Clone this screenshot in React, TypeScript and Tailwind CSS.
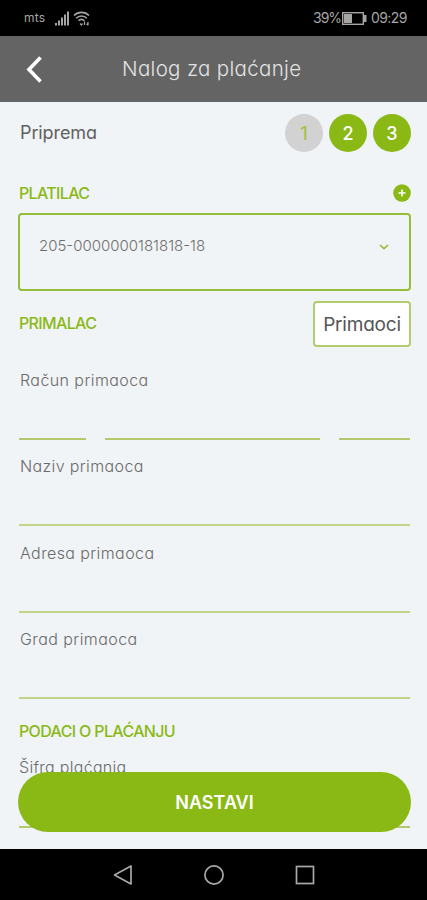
import React from 'react';
import clsx from 'clsx';

const steps = [
  { id: 1, done: false },
  { id: 2, done: true },
  { id: 3, done: true },
];

const fields = [
  { label: 'Naziv primaoca', tracking: 'tracking-[0.37px]' },
  { label: 'Adresa primaoca', tracking: 'tracking-[0.4px]' },
  { label: 'Grad primaoca', tracking: 'tracking-[0.43px]' },
];

function StatusBar() {
  return (
    <div className="h-9 shrink-0 bg-black flex items-center justify-between pl-6 pr-5 text-[#a5a5a5]">
      <div className="flex items-center">
        <span className="w-[23px] text-[12px] leading-none tracking-[0.2px]">mts</span>
        <svg width="15" height="15" viewBox="0 0 15 15" className="ml-2" fill="currentColor">
          <rect x="0" y="12" width="2" height="2.5" />
          <rect x="3" y="9.5" width="2" height="5" />
          <rect x="6" y="6.5" width="2" height="8" />
          <rect x="9" y="3.5" width="2" height="11" />
          <rect x="12" y="0.5" width="2" height="14" />
        </svg>
        <svg width="17" height="15" viewBox="0 0 17 15" className="ml-[3px]" fill="none" stroke="currentColor" strokeWidth="1.6">
          <path d="M1 4.5C5 0.3 12 0.3 16 4.5" />
          <path d="M3.2 7.2C6 4.2 11 4.2 13.8 7.2" />
          <path d="M5.5 9.8C7.3 8 9.7 8 11.5 9.8" />
          <path d="M7 12.5L8.5 14L9.5 12.5M11.5 14V10.5M15 11V14.2M13.7 12.7L15 14.2" strokeWidth="1.3" />
        </svg>
      </div>
      <div className="flex items-center text-[14px] leading-none">
        <span className="w-[27px] tracking-[-1px]">39%</span>
        <svg width="25" height="13" viewBox="0 0 25 13" className="ml-0.5 mr-1">
          <rect x="0.7" y="0.7" width="20.6" height="11.6" fill="none" stroke="currentColor" strokeWidth="1.4" />
          <rect x="2" y="2" width="8" height="9" fill="currentColor" />
          <rect x="22" y="3" width="2.5" height="7" fill="currentColor" />
        </svg>
        <span className="w-[36px] tracking-[-0.6px]">09:29</span>
      </div>
    </div>
  );
}

function Header() {
  return (
    <header className="h-[66px] shrink-0 bg-[#646464] flex items-center">
      <button className="w-[122px] pl-[26px]">
        <svg width="17" height="27" viewBox="0 0 17 27" fill="none" stroke="#fff" strokeWidth="3.6">
          <path d="M14.5 1.5L3 13.5L14.5 25.5" />
        </svg>
      </button>
      <h1 className="text-[20.5px] leading-none text-[#e3e3e3] tracking-[0.32px] font-light whitespace-nowrap">
        Nalog za plaćanje
      </h1>
    </header>
  );
}

function NavBar() {
  return (
    <nav className="h-[51px] shrink-0 bg-black flex justify-center items-center gap-[71px] text-[#a9a9a9]">
      <svg width="20" height="20" viewBox="0 0 20 20" fill="none" stroke="currentColor" strokeWidth="1.7" strokeLinejoin="round">
        <path d="M18 1V19L1.5 10Z" />
      </svg>
      <svg width="20" height="20" viewBox="0 0 20 20" fill="none" stroke="currentColor" strokeWidth="1.7">
        <circle cx="10" cy="10" r="9.1" />
      </svg>
      <svg width="20" height="20" viewBox="0 0 20 20" fill="none" stroke="currentColor" strokeWidth="1.7">
        <rect x="1.5" y="1.5" width="17" height="17" />
      </svg>
    </nav>
  );
}

export default function App() {
  return (
    <div className="relative w-[427px] h-[900px] overflow-hidden flex flex-col bg-[#f1f4f6] font-['Inter','Noto_Sans',sans-serif] [font-feature-settings:'cv11']">
      <StatusBar />
      <Header />

      <main className="flex-1 min-h-0 overflow-hidden pl-[18px] pr-4 pt-3">
        <div className="h-[38px] flex items-center justify-between">
          <span className="pl-0.5 pb-px text-[18px] tracking-[-0.1px] text-[#616161]">Priprema</span>
          <div className="flex gap-1.5">
            {steps.map((step) => (
              <span
                key={step.id}
                className={clsx(
                  'size-[38px] rounded-full flex items-center justify-center text-[18px] font-medium',
                  step.done ? 'bg-[#8ab916] text-white' : 'bg-[#d2d2d2] text-[#a3c447]'
                )}
              >
                {step.id}
              </span>
            ))}
          </div>
        </div>

        <div className="mt-8 h-[18px] flex items-center justify-between">
          <h2 className="pl-px text-[16px] font-medium tracking-[-0.65px] text-[#8ab916]">PLATILAC</h2>
          <svg width="18" height="18" viewBox="0 0 18 18">
            <circle cx="9" cy="9" r="8.8" fill="#8ab916" />
            <path d="M9 5.5V12.5M5.5 9H12.5" stroke="#fff" strokeWidth="1.6" />
          </svg>
        </div>

        <div className="mt-[11px] h-[78px] border-[2.5px] border-[#94bd39] rounded-[4px] pl-[19px] pr-5 pt-[19px] flex items-start justify-between">
          <span className="text-[15px] leading-[24px] font-light text-[#6e6e6e]">205-0000000181818-18</span>
          <svg width="10" height="6" viewBox="0 0 10 6" className="mt-[10px]" fill="none" stroke="#94bd39" strokeWidth="1.6">
            <path d="M1 1L5 4.7L9 1" />
          </svg>
        </div>

        <div className="mt-[10px] h-[46px] flex items-center justify-between">
          <h2 className="pl-px pb-0.5 text-[16px] font-medium tracking-[-0.65px] text-[#8ab916]">PRIMALAC</h2>
          <button className="w-[98px] h-[46px] bg-white border-2 border-[#b3cc6c] rounded-[4px] text-[19px] leading-none tracking-[-0.2px] text-[#555]">
            Primaoci
          </button>
        </div>

        <div className="pl-px pr-px">
          <div className="mt-[21px] h-[72px] flex flex-col justify-between">
            <label className="pl-px text-[16px] leading-[24px] font-light tracking-[0.42px] text-[#6a6a6a]">Račun primaoca</label>
            <div className="flex gap-[19px]">
              <div className="w-[67px] h-0.5 bg-[#b3c96b]" />
              <div className="w-[215px] h-0.5 bg-[#b3c96b]" />
              <div className="flex-1 h-0.5 bg-[#b3c96b]" />
            </div>
          </div>
          {fields.map((field) => (
            <div key={field.label} className="mt-[14.4px] h-[72px] border-b-2 border-[#c1d589]">
              <label className={clsx('block pl-px text-[16px] leading-[24px] font-light text-[#6a6a6a]', field.tracking)}>
                {field.label}
              </label>
            </div>
          ))}

          <h2 className="mt-5 text-[16px] leading-[24px] font-medium tracking-[-0.65px] text-[#8ab916]">PODACI O PLAĆANJU</h2>
          <div className="mt-3 h-[73px] border-b-2 border-[#b3c96b]">
            <label className="block text-[16px] leading-[24px] font-light tracking-[0.3px] text-[#6a6a6a]">Šifra plaćanja</label>
          </div>
        </div>
      </main>

      <button className="absolute left-[18px] right-4 top-[772px] h-[60px] rounded-full bg-[#8ab916] text-white text-[18px] font-semibold">
        NASTAVI
      </button>

      <NavBar />
    </div>
  );
}
